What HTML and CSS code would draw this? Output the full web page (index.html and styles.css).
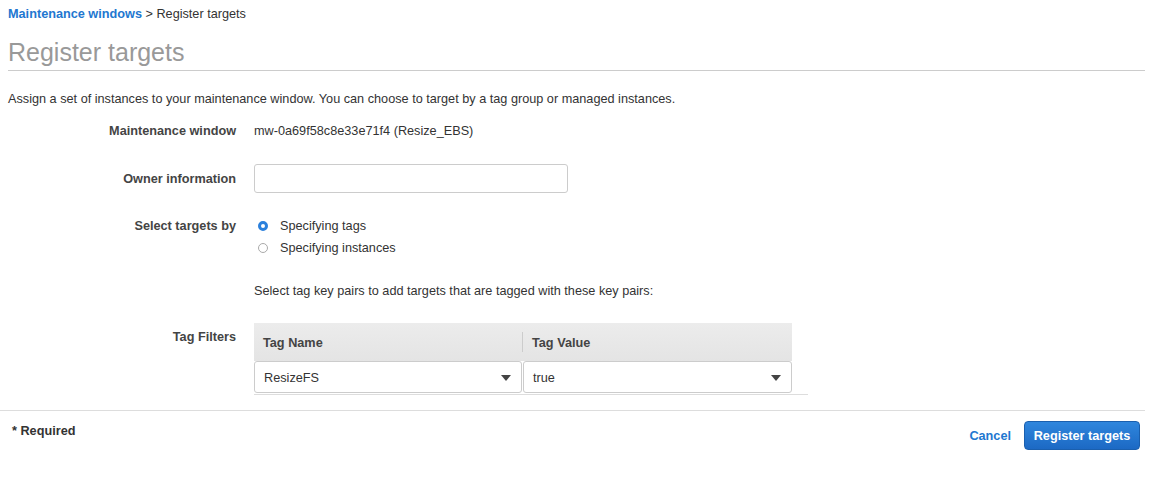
FILE: index.html
```html
<!DOCTYPE html>
<html lang="en">
<head>
    <meta charset="UTF-8">
    <title>Register targets</title>
    <link rel="stylesheet" href="styles.css">
</head>
<body>
    <div class="page">
        <div class="crumbs"><a href="#">Maintenance windows</a> &gt; Register targets</div>
        <h1 class="titulo">Register targets</h1>
        <p class="desc">Assign a set of instances to your maintenance window. You can choose to target by a tag group or managed instances.</p>

        <div class="form">
            <div class="row r-window">
                <span class="label">Maintenance window</span>
                <span class="value">mw-0a69f58c8e33e71f4 (Resize_EBS)</span>
            </div>
            <div class="row r-owner">
                <span class="label">Owner information</span>
                <input type="text" class="campo">
            </div>
            <div class="row r-select">
                <span class="label">Select targets by</span>
                <div class="radios">
                    <label class="radio"><span class="dot on"></span>Specifying tags</label>
                    <label class="radio"><span class="dot"></span>Specifying instances</label>
                </div>
            </div>
            <div class="row r-hint">
                <span class="label"></span>
                <span class="value">Select tag key pairs to add targets that are tagged with these key pairs:</span>
            </div>
            <div class="row r-tags">
                <span class="label">Tag Filters</span>
                <div class="tabela">
                    <div class="thead">
                        <div class="th">Tag Name</div>
                        <div class="th sep">Tag Value</div>
                    </div>
                    <div class="tbody">
                        <div class="sel">ResizeFS<span class="seta"></span></div>
                        <div class="sel">true<span class="seta"></span></div>
                    </div>
                </div>
            </div>
        </div>
    </div>

    <div class="rodape">
        <span class="req">* Required</span>
        <div class="acoes">
            <a href="#" class="cancel">Cancel</a>
            <button class="primary">Register targets</button>
        </div>
    </div>
</body>
</html>
```

FILE: styles.css
```css
*{
    margin: 0;
    padding: 0;
    box-sizing: border-box;
}

body{
    font-family: "Liberation Sans", Arial, sans-serif;
    font-size: 12.7px;
    color: #444;
    background: #fff;
}

.page{
    padding: 6px 21px 0 8px;
}
.crumbs{
    line-height: 16px;
    color: #333;
}
.crumbs a{
    color: #2277d0;
    font-weight: bold;
    text-decoration: none;
}

.titulo{
    margin-top: 15px;
    font-size: 25px;
    font-weight: normal;
    line-height: 30px;
    color: #999;
    padding-bottom: 3px;
    border-bottom: 1px solid #ccc;
}
.desc{
    margin-top: 20px;
    line-height: 16px;
    color: #333;
}

.row{
    display: grid;
    grid-template-columns: 228px 1fr;
    column-gap: 18px;
    align-items: center;
    line-height: 16px;
}
.label{
    text-align: right;
    font-weight: bold;
    color: #444;
}
.value{
    color: #333;
}
.r-window{
    margin-top: 16px;
}
.r-owner{
    margin-top: 25px;
}
.campo{
    width: 314px;
    height: 29px;
    border: 1px solid #ccc;
    border-radius: 3px;
    background: #fff;
}
.r-select{
    margin-top: 22px;
    align-items: start;
    line-height: 22px;
}
.radio{
    display: flex;
    align-items: center;
    color: #333;
}
.dot{
    width: 10px;
    height: 10px;
    border-radius: 50%;
    border: 1px solid #aaa;
    margin: 0 12px 0 4px;
    background: #fff;
}
.dot.on{
    border: 3px solid #2b80dc;
    background: #fff;
}
.r-hint{
    margin-top: 24px;
}
.r-tags{
    margin-top: 24px;
    align-items: start;
}
.r-tags .label{
    padding-top: 6px;
}

.tabela{
    width: 554px;
    border-bottom: 1px solid #ddd;
}
.thead{
    display: grid;
    grid-template-columns: 268px 270px;
    height: 38px;
    width: 538px;
    background: linear-gradient(#ececec, #e4e4e4);
}
.th{
    font-weight: bold;
    color: #444;
    padding: 12px 9px 0;
}
.th.sep{
    position: relative;
    padding-left: 10px;
}
.th.sep::before{
    content: "";
    position: absolute;
    left: 0;
    top: 9px;
    height: 20px;
    border-left: 1px solid #ccc;
}
.tbody{
    display: grid;
    grid-template-columns: 268px 269px;
    column-gap: 1px;
    width: 538px;
    height: 32px;
    margin-bottom: 1px;
}
.sel{
    position: relative;
    border: 1px solid #ccc;
    border-radius: 3px;
    padding: 8px 9px 0;
    color: #333;
    background: #fff;
}
.seta{
    position: absolute;
    right: 10px;
    top: 13px;
    width: 0;
    height: 0;
    border-left: 5px solid transparent;
    border-right: 5px solid transparent;
    border-top: 6px solid #444;
}

.rodape{
    margin-top: 15px;
    width: 1145px;
    border-top: 1px solid #ddd;
    display: flex;
    justify-content: space-between;
    align-items: flex-start;
    padding: 10px 5px 0 12px;
}
.req{
    font-weight: bold;
    color: #333;
    margin-top: 2px;
    line-height: 16px;
}
.acoes{
    display: flex;
    align-items: center;
    gap: 13px;
}
.cancel{
    color: #2277d0;
    font-weight: bold;
    text-decoration: none;
}
.primary{
    height: 29px;
    width: 116px;
    border: 1px solid #1a5fae;
    border-radius: 4px;
    background: linear-gradient(#2f86dd, #1c69c4);
    color: #fff;
    font-family: "Liberation Sans", Arial, sans-serif;
    font-size: 12.7px;
    font-weight: bold;
    cursor: pointer;
}
```
